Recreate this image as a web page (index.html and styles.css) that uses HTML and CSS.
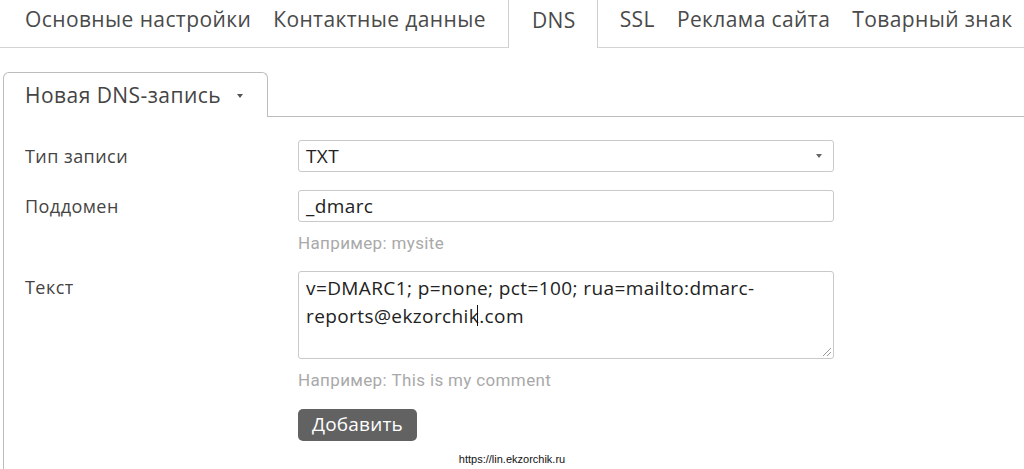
FILE: index.html
```html
<!DOCTYPE html>
<html lang="ru">
<head>
<meta charset="utf-8">
<title>DNS</title>
<link rel="stylesheet" href="styles.css">
</head>
<body>
<nav class="tabs">
  <a class="tab first">Основные настройки</a>
  <a class="tab">Контактные данные</a>
  <a class="tab active">DNS</a>
  <a class="tab">SSL</a>
  <a class="tab">Реклама сайта</a>
  <a class="tab">Товарный знак</a>
</nav>

<section class="area">
  <div class="subtabs">
    <div class="subtab">Новая DNS-запись <span class="caret"></span></div>
    <div class="subtab-fill"></div>
  </div>
  <form class="panel">
    <div class="row">
      <label class="label">Тип записи</label>
      <div class="field">
        <div class="control select"><span>TXT</span><span class="caret"></span></div>
      </div>
    </div>
    <div class="row">
      <label class="label">Поддомен</label>
      <div class="field">
        <div class="control">_dmarc</div>
        <div class="hint">Например: mysite</div>
      </div>
    </div>
    <div class="row">
      <label class="label">Текст</label>
      <div class="field">
        <div class="control textarea">v=DMARC1; p=none; pct=100; rua=mailto:dmarc-reports@ekzorchik.com<span class="cursor"></span><span class="grip"></span></div>
        <div class="hint">Например: This is my comment</div>
      </div>
    </div>
    <div class="row row-actions">
      <div class="label"></div>
      <div class="field">
        <button type="button" class="btn">Добавить</button>
      </div>
    </div>
  </form>
</section>

<div class="watermark">https://lin.ekzorchik.ru</div>
</body>
</html>
```

FILE: styles.css
```css
html, body {
  margin: 0;
  padding: 0;
  background: #fff;
}
body {
  font-family: "Open Sans", "Noto Sans", sans-serif;
  color: #444;
  height: 469px;
  overflow: hidden;
  position: relative;
}

/* top tabs */
.tabs {
  display: flex;
  align-items: stretch;
  height: 47px;
  border-bottom: 1px solid #d4d4d4;
  padding-left: 14px;
}
.tab {
  display: flex;
  align-items: center;
  padding: 0 11px 9px;
  font-size: 21px;
  color: #4a4a4a;
  white-space: nowrap;
  letter-spacing: 0.4px;
}
.tab.active {
  padding: 0 21px 9px 23px;
  margin: 0 11px -1px;
  background: #fff;
  border-left: 1px solid #cfcfcf;
  border-right: 1px solid #cfcfcf;
}

/* sub tabs */
.area {
  margin: 24px 0 0 3px;
}
.subtabs {
  display: flex;
  height: 45px;
}
.subtab {
  display: flex;
  align-items: center;
  box-sizing: border-box;
  width: 265px;
  padding: 0 0 0 21px;
  border: 1px solid #bcbcbc;
  border-bottom: none;
  border-radius: 6px 6px 0 0;
  font-size: 21px;
  color: #444;
  white-space: nowrap;
  letter-spacing: 0.45px;
}
.subtab .caret {
  margin-left: 16px;
  margin-top: 2px;
}
.subtab-fill {
  flex: 1;
  border-bottom: 1px solid #bcbcbc;
}
.caret {
  display: inline-block;
  width: 0;
  height: 0;
  border-left: 3px solid transparent;
  border-right: 3px solid transparent;
  border-top: 4px solid #555;
}

/* panel */
.panel {
  border-left: 1px solid #bcbcbc;
  padding: 23px 0 40px 21px;
  display: flex;
  flex-direction: column;
  gap: 18px;
}
.row {
  display: grid;
  grid-template-columns: 273px 536px;
}
.row-actions {
  margin-top: 1px;
}
.label {
  font-size: 18px;
  line-height: 22px;
  padding-top: 5px;
  color: #444;
  letter-spacing: 0.45px;
}
.field {
  display: flex;
  flex-direction: column;
  align-items: flex-start;
}
.control {
  box-sizing: border-box;
  width: 536px;
  height: 32px;
  border: 1px solid #c9c9c9;
  border-radius: 3px;
  padding: 3px 7px;
  font-size: 19px;
  line-height: 24px;
  color: #222;
  letter-spacing: 0.4px;
}
.select {
  display: flex;
  align-items: center;
  justify-content: space-between;
  padding: 0 11px 0 7px;
}
.select .caret {
  border-top-color: #666;
}
.textarea {
  height: 88px;
  line-height: 28px;
  padding: 2px 7px;
  position: relative;
}
/* text caret overlay in the textarea */
.cursor {
  position: absolute;
  left: 178px;
  top: 33px;
  width: 1px;
  height: 21px;
  background: #111;
}
.grip {
  position: absolute;
  right: 2px;
  bottom: 2px;
  width: 8px;
  height: 8px;
  background:
    linear-gradient(135deg, transparent 45%, #999 45%, #999 55%, transparent 55%, transparent 70%, #999 70%, #999 80%, transparent 80%);
}
.hint {
  font-family: Roboto, "Liberation Sans", sans-serif;
  font-size: 17px;
  line-height: 20px;
  color: #a9a9a9;
  margin-top: 11px;
  letter-spacing: 0.35px;
}
.btn {
  width: 119px;
  height: 32px;
  border: none;
  border-radius: 5px;
  background: #626262;
  color: #fff;
  font-family: "Open Sans", "Noto Sans", sans-serif;
  font-size: 19px;
  padding: 0 0 2px;
  letter-spacing: 0.2px;
}

.watermark {
  position: absolute;
  left: 0;
  right: 0;
  top: 453px;
  text-align: center;
  font-family: "Liberation Sans", Arial, sans-serif;
  font-size: 11px;
  color: #111;
}
```
